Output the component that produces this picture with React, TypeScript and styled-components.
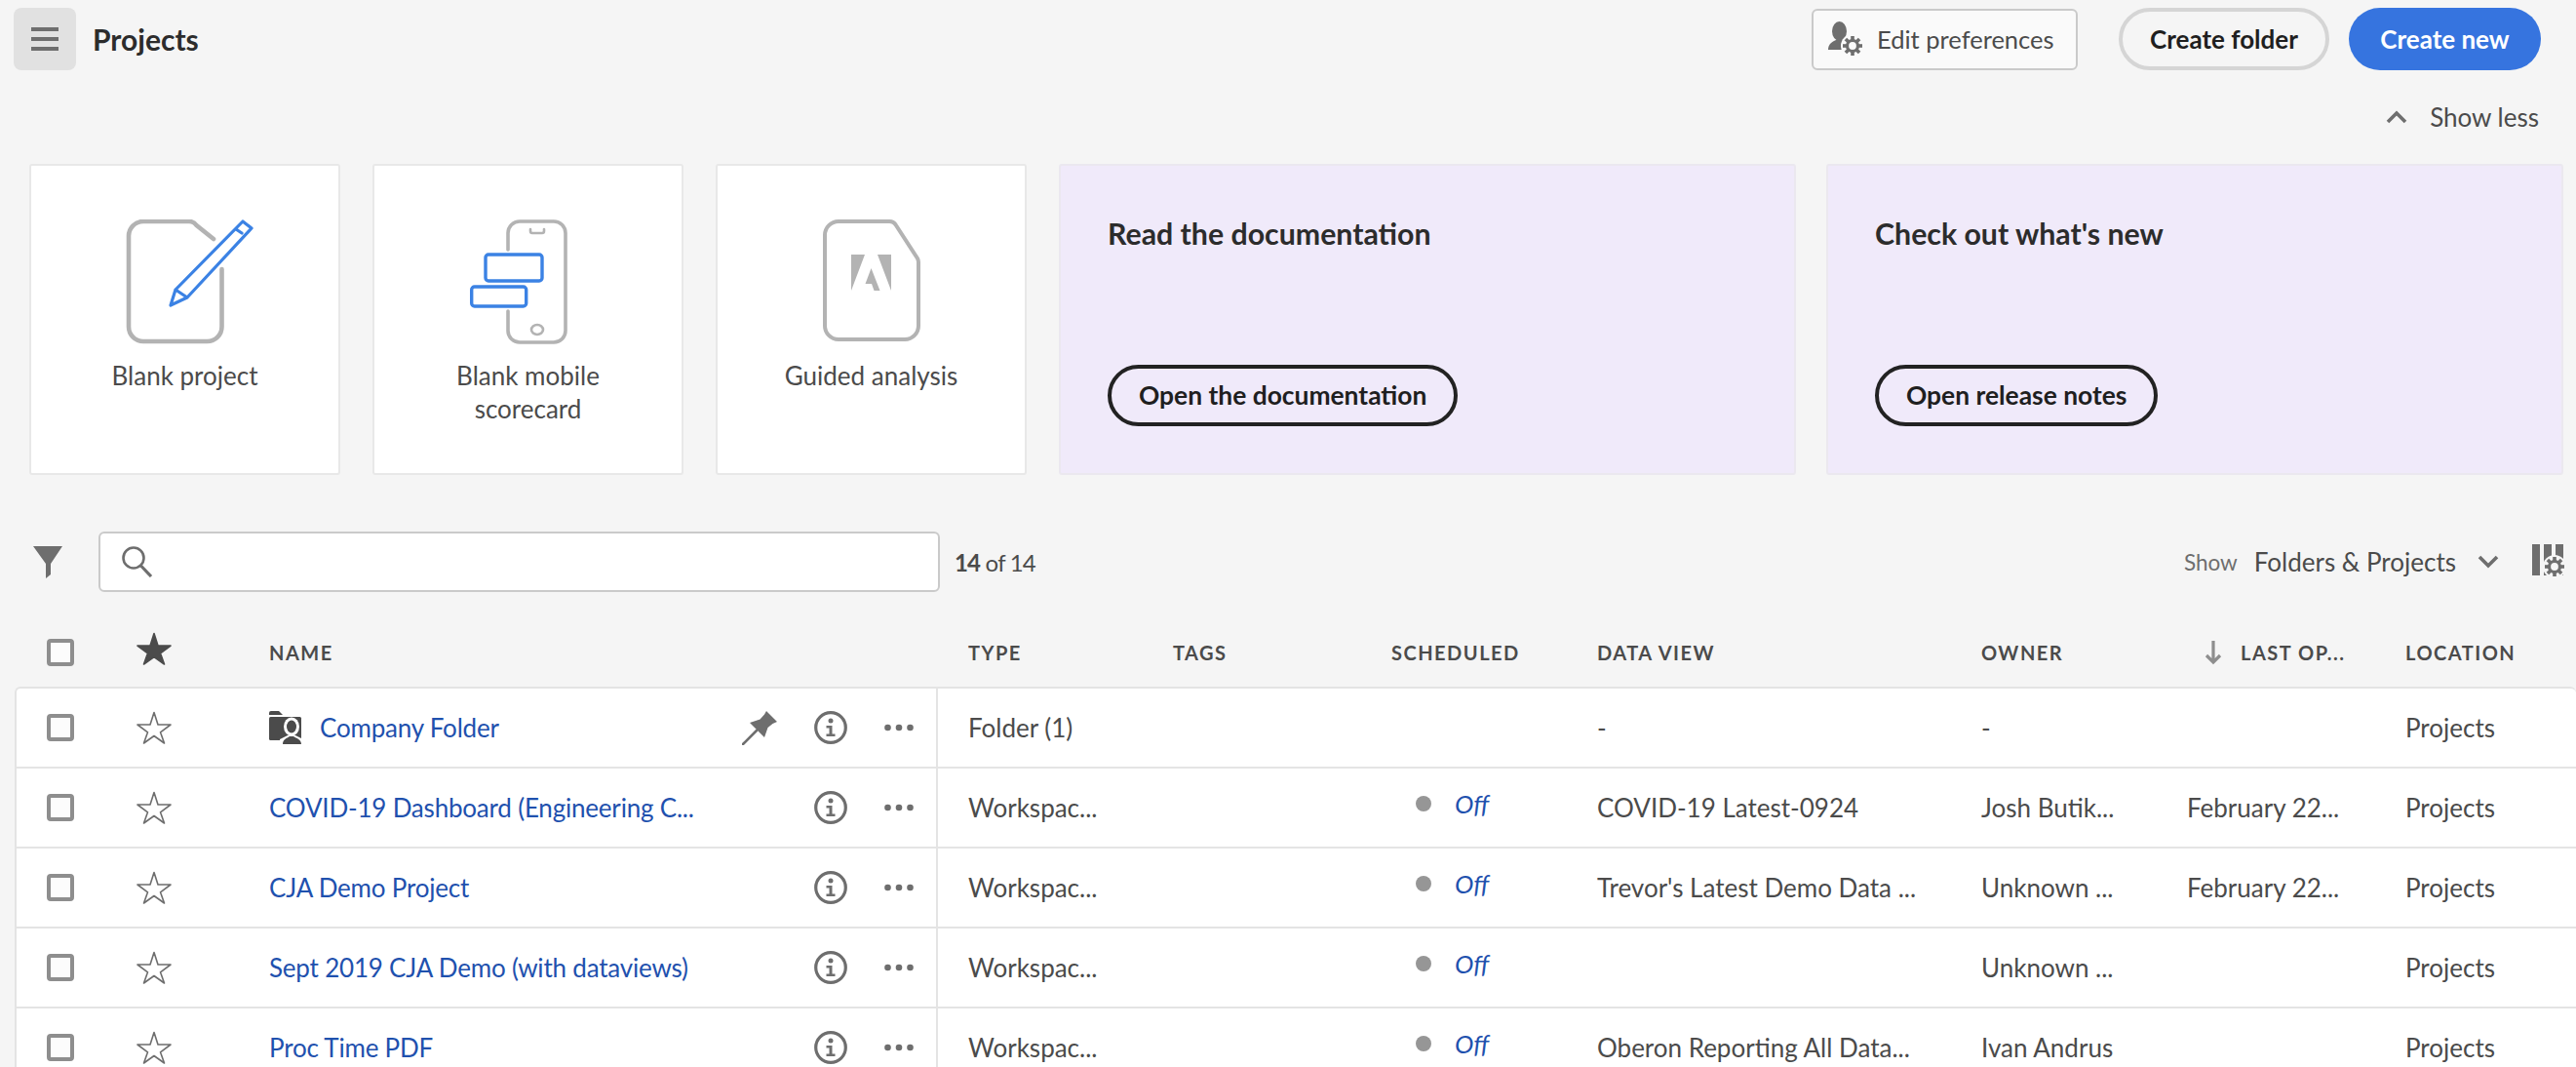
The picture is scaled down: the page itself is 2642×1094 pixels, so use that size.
import React from "react";
import styled, { createGlobalStyle } from "styled-components";

const GlobalStyle = createGlobalStyle`
  html, body {
    margin: 0;
    background: #f5f5f5;
    font-family: "Lato", "Open Sans", sans-serif;
    color: #4b4b4b;
  }
  * { box-sizing: border-box; }
`;

const GRAY = "#6e6e6e";
const LIGHT = "#b3b3b3";
const BLUE = "#3b82e4";

const Page = styled.main`
  height: 1094px;
  overflow: hidden;
  padding-top: 8px;
`;

const TopBar = styled.header`
  display: flex;
  align-items: center;
  height: 64px;
  padding: 0 36px 0 14px;
`;

const MenuButton = styled.button`
  width: 64px;
  height: 64px;
  border: none;
  border-radius: 8px;
  background: #e1e1e1;
  display: flex;
  flex-direction: column;
  align-items: center;
  justify-content: center;
  gap: 6px;
  padding: 0;
`;

const MenuBar = styled.span`
  width: 28px;
  height: 4px;
  background: ${GRAY};
`;

const PageTitle = styled.h1`
  margin: 0 auto 0 17px;
  font-size: 30px;
  font-weight: 700;
  color: #2c2c2c;
`;

const PrefsButton = styled.button`
  display: flex;
  align-items: center;
  gap: 12px;
  width: 273px;
  height: 63px;
  padding: 0 0 0 15px;
  margin-right: 42px;
  border: 2px solid #cacaca;
  border-radius: 6px;
  background: #fafafa;
  color: #4b4b4b;
  font: inherit;
  font-size: 25.5px;
`;

const PillButton = styled.button<{ $primary?: boolean }>`
  height: 64px;
  border-radius: 32px;
  font: inherit;
  font-size: 26px;
  font-weight: 700;
  border: ${(p) => (p.$primary ? "none" : "4px solid #d5d5d5")};
  background: ${(p) => (p.$primary ? "#3674df" : "transparent")};
  color: ${(p) => (p.$primary ? "#fff" : "#1f1f1f")};
  width: ${(p) => (p.$primary ? "197px" : "216px")};
  margin-left: ${(p) => (p.$primary ? "20px" : "0")};
`;

const ShowLessRow = styled.div`
  display: flex;
  justify-content: flex-end;
  align-items: center;
  gap: 23px;
  height: 34px;
  margin-top: 31px;
  padding-right: 38px;
  font-size: 26px;
`;

const CardRow = styled.section`
  display: flex;
  gap: 33px;
  margin-top: 31px;
  padding-left: 30px;
`;

const DocGroup = styled.div`
  display: flex;
  gap: 31px;
`;

const TileCard = styled.div`
  width: 319px;
  height: 319px;
  padding: 55px 50px 0;
  background: #fff;
  border: 2px solid #e8e8e8;
  border-radius: 3px;
  text-align: center;
  font-size: 26px;
  line-height: 34px;
`;

const TileIcon = styled.div`
  height: 128px;
  margin-bottom: 15px;
  display: flex;
  justify-content: center;
`;

const DocCard = styled.div`
  width: 756px;
  height: 319px;
  padding: 50px 48px 0;
  background: #f0eafa;
  border: 2px solid #ebe8ef;
  border-radius: 3px;
  display: flex;
  flex-direction: column;
  align-items: flex-start;
`;

const DocTitle = styled.h2`
  margin: 0;
  height: 154px;
  font-size: 30.3px;
  line-height: 38px;
  font-weight: 700;
  color: #2c2c2c;
`;

const OutlineButton = styled.button`
  height: 63px;
  padding: 0 28px 2px;
  border: 4px solid #222;
  border-radius: 32px;
  background: transparent;
  color: #1f1f1f;
  font: inherit;
  font-size: 26.4px;
  font-weight: 700;
`;

const Toolbar = styled.div`
  display: flex;
  align-items: center;
  height: 62px;
  margin-top: 58px;
  padding-left: 34px;
`;

const SearchBox = styled.div`
  display: flex;
  align-items: center;
  width: 863px;
  height: 62px;
  margin-left: 37px;
  padding-left: 22px;
  border: 2px solid #cacaca;
  border-radius: 6px;
  background: #fff;
`;

const Count = styled.div`
  margin-left: 15px;
  margin-right: auto;
  font-size: 24px;
  letter-spacing: -0.8px;
  b { font-weight: 700; }
`;

const ShowLabel = styled.span`
  font-size: 22.5px;
  color: ${GRAY};
`;

const ShowValue = styled.span`
  margin: 0 22px 0 17px;
  font-size: 26px;
`;

const ColumnsSlot = styled.div`
  display: flex;
  margin: 0 9px 0 34px;
`;

const Table = styled.section`
  margin-top: 33px;
  margin-left: 15px;
`;

const columns = "945px 208px 224px 211px 394px 211px 224px 1fr";

const HeaderRow = styled.div`
  display: grid;
  grid-template-columns: ${columns};
  height: 64px;
  padding-left: 2px;
  padding-bottom: 7px;
  align-items: center;
`;

const HeaderCell = styled.div<{ $pad?: number }>`
  display: flex;
  align-items: center;
  gap: 19px;
  padding-left: ${(p) => p.$pad ?? 33}px;
  font-size: 20px;
  font-weight: 700;
  letter-spacing: 1.5px;
  text-transform: uppercase;
  white-space: nowrap;
`;

const Body = styled.div`
  background: #fff;
  border-top: 2px solid #e4e4e4;
  border-left: 2px solid #e4e4e4;
  border-top-left-radius: 6px;
  border-top-right-radius: 6px;
`;

const Row = styled.div`
  display: grid;
  grid-template-columns: ${columns};
  height: 82px;
  border-bottom: 2px solid #e4e4e4;
  align-items: stretch;
`;

const Frozen = styled.div<{ $divider?: boolean }>`
  display: flex;
  align-items: center;
  border-right: ${(p) => (p.$divider ? "2px solid #e4e4e4" : "none")};
`;

const SelectCell = styled.div`
  width: 123px;
  padding-left: 31px;
  display: flex;
  align-items: center;
`;

const Checkbox = styled.span`
  width: 28px;
  height: 28px;
  border: 4px solid #8e8e8e;
  border-radius: 4px;
  background: #fcfcfc;
`;

const StarCell = styled.div<{ $raised?: boolean }>`
  width: 136px;
  display: flex;
  align-items: center;
  padding-bottom: ${(p) => (p.$raised ? "8px" : "0")};
`;

const NameCell = styled.div`
  flex: 1;
  display: flex;
  align-items: center;
  gap: 17px;
  padding-right: 23px;
  font-size: 26px;
  letter-spacing: -0.2px;
  color: #1f51ae;
  white-space: nowrap;
`;

const NameLink = styled.a`
  margin-right: auto;
`;

const Actions = styled.div`
  display: flex;
  align-items: center;
  gap: 38px;
`;

const Cell = styled.div<{ $pad?: number }>`
  display: flex;
  align-items: center;
  padding-left: ${(p) => p.$pad ?? 33}px;
  font-size: 26px;
  white-space: nowrap;
`;

const ScheduleCell = styled(Cell)`
  padding-left: 58px;
  gap: 24px;
  padding-bottom: 8px;
`;

const StatusDot = styled.span`
  width: 16px;
  height: 16px;
  border-radius: 50%;
  background: #969696;
`;

const OffLink = styled.i`
  color: #1f51ae;
`;

const Gear = ({ cx, cy, bg }: { cx: number; cy: number; bg: string }) => (
  <g>
    <circle cx={cx} cy={cy} r={12} fill={bg} />
    {[0, 45, 90, 135].map((a) => (
      <rect key={a} x={cx - 1.8} y={cy - 10} width={3.6} height={20} fill={GRAY} transform={`rotate(${a} ${cx} ${cy})`} />
    ))}
    <circle cx={cx} cy={cy} r={5.5} fill={bg} stroke={GRAY} strokeWidth={3.2} />
  </g>
);

const PrefsIcon = () => (
  <svg width="38" height="36" viewBox="0 0 38 36">
    <ellipse cx="11.5" cy="10" rx="7.5" ry="10" fill={GRAY} />
    <path d="M0 29c0-6 4-8 8-10h7l4 4-3 6z" fill={GRAY} />
    <Gear cx={25} cy={25} bg="#fafafa" />
  </svg>
);

const Chevron = ({ up }: { up?: boolean }) => (
  <svg width="22" height="14" viewBox="0 0 22 14">
    <path d={up ? "M2 12 11 3l9 9" : "M2 2l9 9 9-9"} fill="none" stroke={GRAY} strokeWidth="3.6" />
  </svg>
);

// viewBox carries extra room on one side: these two drawings sit off the card's centre line
const BlankProjectIcon = () => (
  <svg width="140" height="129" viewBox="-10 0 140 129" fill="none" strokeLinecap="round" strokeLinejoin="round">
    <path d="M97.5 51v59a15 15 0 0 1-15 15H17A15 15 0 0 1 2 110V17A15 15 0 0 1 17 2h47a9 9 0 0 1 7.5 4L89 20" stroke={LIGHT} strokeWidth="4.6" />
    <path d="M45 88l5-16L119 2l9 7-66 71zM50 72l12 8M112 10l6 4" stroke={BLUE} strokeWidth="3.2" fill="#fff" />
  </svg>
);

const MobileIcon = () => (
  <svg width="120" height="129" viewBox="0 0 120 129" fill="none" strokeLinecap="round" strokeLinejoin="round">
    <path d="M39 31V14A12 12 0 0 1 51 2h35a12 12 0 0 1 12 12v100a12 12 0 0 1-12 12H51a12 12 0 0 1-12-12V94" stroke={LIGHT} strokeWidth="3.6" />
    <path d="M62 10v2a2 2 0 0 0 2 2h10a2 2 0 0 0 2-2v-2" stroke={LIGHT} strokeWidth="2.6" />
    <ellipse cx="69" cy="113" rx="6" ry="5" stroke={LIGHT} strokeWidth="2.6" />
    <rect x="16" y="36" width="58" height="27" rx="3" stroke={BLUE} strokeWidth="3.4" />
    <rect x="1.7" y="69" width="56" height="20" rx="3" stroke={BLUE} strokeWidth="3.4" />
  </svg>
);

const GuidedIcon = () => (
  <svg width="102" height="128" viewBox="0 0 102 128" fill="none">
    <path d="M17 2h52a8 8 0 0 1 7 4l22 34a8 8 0 0 1 1 4v65a14 14 0 0 1-14 14H17a14 14 0 0 1-14-14V16A14 14 0 0 1 17 2z" stroke={LIGHT} strokeWidth="4" />
    <path d="M30 36h14L30 73zM57 36h14v37zM50.5 50l9 23h-6l-2.5-7h-6.5z" fill={LIGHT} />
  </svg>
);

const FilterIcon = () => (
  <svg width="30" height="33" viewBox="0 0 30 33">
    <path d="M0 0h30L18 18v11l-5 4V18z" fill={GRAY} />
  </svg>
);

const SearchIcon = () => (
  <svg width="32" height="32" viewBox="0 0 32 32" fill="none" stroke={GRAY} strokeWidth="2.6">
    <circle cx="12" cy="12" r="10.5" />
    <path d="M19.5 20 30 31" strokeWidth="3.2" />
  </svg>
);

const ColumnsIcon = () => (
  <svg width="36" height="36" viewBox="0 0 36 36">
    <path d="M0 0h8v32H0zM12 0h8v32h-8zM24 0h8v32h-8z" fill={GRAY} />
    <Gear cx={23} cy={23} bg="#f5f5f5" />
  </svg>
);

const StarIcon = ({ filled }: { filled?: boolean }) => (
  <svg width="36" height="34" viewBox="0 0 36 34">
    <path
      d="M18 1.5l4 12.5h13l-10.500 7.800L28.500 33 18 25.500 7.500 33l4-11.200L1 14h13z"
      fill={filled ? "#4b4b4b" : "none"}
      stroke={filled ? "#4b4b4b" : GRAY}
      strokeWidth="1.6"
      strokeLinejoin="round"
    />
  </svg>
);

const FolderIcon = () => (
  <svg width="35" height="34" viewBox="0 0 35 34">
    <path d="M0 4V2a2 2 0 0 1 2-2h8l4 4z" fill="#4b4b4b" />
    <rect y="6" width="33" height="24" rx="1.5" fill="#4b4b4b" />
    <ellipse cx="23" cy="16" rx="8" ry="9.5" fill="#fff" />
    <path d="M11 34v-5l8-4h8l8 4v5z" fill="#fff" />
    <ellipse cx="23" cy="16" rx="5" ry="6.5" fill="#4b4b4b" />
    <path d="M14 34c0-5 4-6 7-8h4c3 2 8 3 8 8z" fill="#4b4b4b" />
  </svg>
);

const PinIcon = () => (
  <svg width="36" height="35" viewBox="0 0 36 35">
    <path d="M25 0l11 11-4.500 2-5 4L23 27 8 12l10.500-3.500 4.500-5z" fill={GRAY} />
    <path d="M15 20 1 34" stroke={GRAY} strokeWidth="2.6" strokeLinecap="round" />
  </svg>
);

const InfoIcon = () => (
  <svg width="34" height="34" viewBox="0 0 34 34" fill="none">
    <circle cx="17" cy="17" r="15.3" stroke={GRAY} strokeWidth="3.2" />
    <circle cx="17" cy="10" r="2.5" fill={GRAY} />
    <path d="M12.500 15h6v8.500h3V26h-9v-2.500h3V17.500h-3z" fill={GRAY} />
  </svg>
);

const MoreIcon = () => (
  <svg width="30" height="8" viewBox="0 0 30 8" fill={GRAY}>
    <circle cx="3.5" cy="4" r="3.3" />
    <circle cx="15" cy="4" r="3.3" />
    <circle cx="26.5" cy="4" r="3.3" />
  </svg>
);

const SortArrow = () => (
  <svg width="18" height="26" viewBox="0 0 18 26" fill="none" stroke="#8e8e8e" strokeWidth="3.2">
    <path d="M9 1v22M2 16l7 7 7-7" />
  </svg>
);

interface Project {
  name: string;
  folder?: boolean;
  type: string;
  scheduled: boolean;
  dataView: string;
  owner: string;
  opened: string;
}

const projects: Project[] = [
  { name: "Company Folder", folder: true, type: "Folder (1)", scheduled: false, dataView: "-", owner: "-", opened: "" },
  { name: "COVID-19 Dashboard (Engineering C...", type: "Workspac...", scheduled: true, dataView: "COVID-19 Latest-0924", owner: "Josh Butik...", opened: "February 22..." },
  { name: "CJA Demo Project", type: "Workspac...", scheduled: true, dataView: "Trevor's Latest Demo Data ...", owner: "Unknown ...", opened: "February 22..." },
  { name: "Sept 2019 CJA Demo (with dataviews)", type: "Workspac...", scheduled: true, dataView: "", owner: "Unknown ...", opened: "" },
  { name: "Proc Time PDF", type: "Workspac...", scheduled: true, dataView: "Oberon Reporting All Data...", owner: "Ivan Andrus", opened: "" },
];

const App: React.FC = () => (
  <Page>
    <GlobalStyle />
    <TopBar>
      <MenuButton aria-label="Menu">
        <MenuBar />
        <MenuBar />
        <MenuBar />
      </MenuButton>
      <PageTitle>Projects</PageTitle>
      <PrefsButton>
        <PrefsIcon />
        Edit preferences
      </PrefsButton>
      <PillButton>Create folder</PillButton>
      <PillButton $primary>Create new</PillButton>
    </TopBar>

    <ShowLessRow>
      <Chevron up />
      Show less
    </ShowLessRow>

    <CardRow>
      <TileCard>
        <TileIcon><BlankProjectIcon /></TileIcon>
        Blank project
      </TileCard>
      <TileCard>
        <TileIcon><MobileIcon /></TileIcon>
        Blank mobile scorecard
      </TileCard>
      <TileCard>
        <TileIcon><GuidedIcon /></TileIcon>
        Guided analysis
      </TileCard>
      <DocGroup>
        <DocCard>
          <DocTitle>Read the documentation</DocTitle>
          <OutlineButton>Open the documentation</OutlineButton>
        </DocCard>
        <DocCard>
          <DocTitle>Check out what's new</DocTitle>
          <OutlineButton>Open release notes</OutlineButton>
        </DocCard>
      </DocGroup>
    </CardRow>

    <Toolbar>
      <FilterIcon />
      <SearchBox><SearchIcon /></SearchBox>
      <Count><b>14</b> of 14</Count>
      <ShowLabel>Show</ShowLabel>
      <ShowValue>Folders &amp; Projects</ShowValue>
      <Chevron />
      <ColumnsSlot><ColumnsIcon /></ColumnsSlot>
    </Toolbar>

    <Table>
      <HeaderRow>
        <Frozen>
          <SelectCell><Checkbox /></SelectCell>
          <StarCell $raised><StarIcon filled /></StarCell>
          <HeaderCell $pad={0}>Name</HeaderCell>
        </Frozen>
        <HeaderCell $pad={31}>Type</HeaderCell>
        <HeaderCell>Tags</HeaderCell>
        <HeaderCell>Scheduled</HeaderCell>
        <HeaderCell>Data view</HeaderCell>
        <HeaderCell>Owner</HeaderCell>
        <HeaderCell $pad={51}><SortArrow />Last op...</HeaderCell>
        <HeaderCell>Location</HeaderCell>
      </HeaderRow>
      <Body>
        {projects.map((p) => (
          <Row key={p.name}>
            <Frozen $divider>
              <SelectCell><Checkbox /></SelectCell>
              <StarCell><StarIcon /></StarCell>
              <NameCell>
                {p.folder && <FolderIcon />}
                <NameLink>{p.name}</NameLink>
                <Actions>
                  {p.folder && <PinIcon />}
                  <InfoIcon />
                  <MoreIcon />
                </Actions>
              </NameCell>
            </Frozen>
            <Cell $pad={31}>{p.type}</Cell>
            <Cell />
            {p.scheduled ? (
              <ScheduleCell>
                <StatusDot />
                <OffLink>Off</OffLink>
              </ScheduleCell>
            ) : (
              <Cell />
            )}
            <Cell>{p.dataView}</Cell>
            <Cell>{p.owner}</Cell>
            <Cell>{p.opened}</Cell>
            <Cell>Projects</Cell>
          </Row>
        ))}
      </Body>
    </Table>
  </Page>
);

export default App;
